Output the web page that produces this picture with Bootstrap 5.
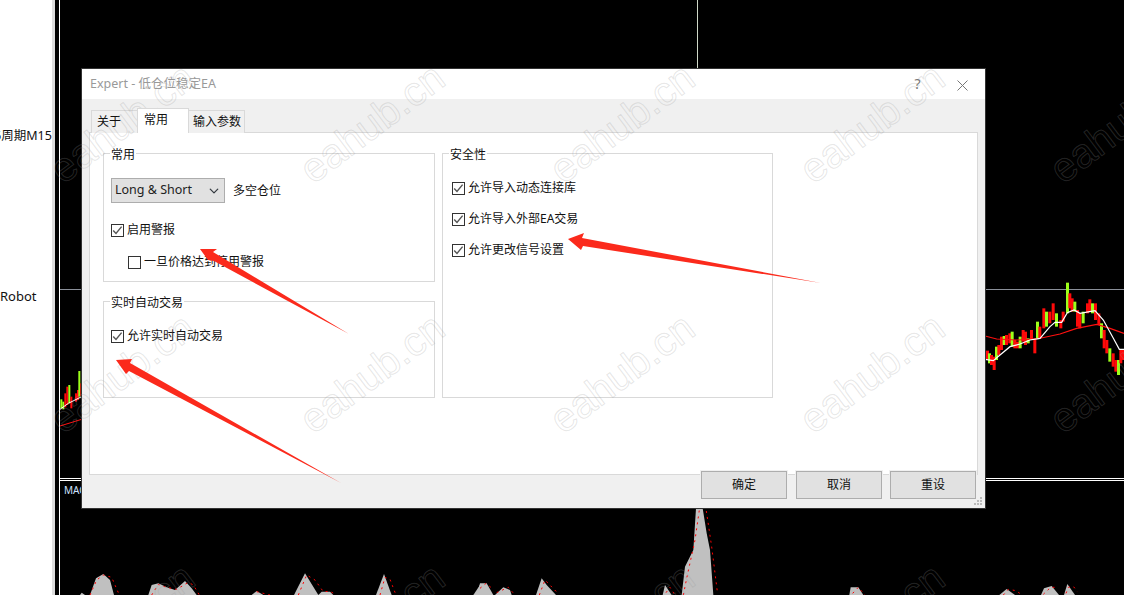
<!DOCTYPE html>
<html lang="zh">
<head>
    <meta charset="UTF-8">
    <title>Expert - 低仓位稳定EA</title>
    <link href="https://cdn.jsdelivr.net/npm/bootstrap@5.3.2/dist/css/bootstrap.min.css" rel="stylesheet">
    <style>
        html, body { margin: 0; background: #fff; overflow: hidden; }
        body, .ea-dialog { font-family: "Noto Sans", "Noto Sans CJK SC", sans-serif; font-size: 12px; color: #111; }
        .desk { width: 1124px; height: 595px; overflow: hidden; }
        .side-labels { width: 52px; white-space: nowrap; line-height: 16px; font-size: 13px; overflow: hidden; }
        .side-labels span { display: block; }
        .label-top { margin-top: 128px; margin-left: -6px; font-size: 12.5px; }
        .label-bot { margin-top: 144px; }
        .side-strip { width: 7px; background: linear-gradient(90deg, #ddd 0 3px, #000 3px); }
        .chart-area { background: #000; }
        .chart-area svg { display: block; }
        .mac-label { position: absolute; left: 5px; top: 483px; color: #cfe3ff; font-size: 10px; line-height: 14px; }

        .ea-dialog { position: absolute; left: 82px; top: 69px; width: 903px; height: 439px; background: #f0f0f0; box-shadow: 0 0 0 1px #333; }
        .title-row { height: 30px; background: #fff; padding: 0 0 0 8px; }
        .title-text { color: #999; font-size: 12.5px; }
        .title-btn { color: #777; font-size: 14px; width: 45px; text-align: center; line-height: 1; }
        .tab-row { margin: 9px 7px 0 7px; height: 24px; padding-left: 2px; }
        .tab-row .nav-link { font-size: 12px; color: #111; height: 23px; line-height: 22px; margin-top: 2px; border: 1px solid #d9d9d9; border-bottom: 0; border-radius: 0; background: #f0f0f0; }
        .tab-first { padding: 0 16px 0 5px; border-right: 0 !important; }
        .tab-last { padding: 0 3px 0 4px; border-left: 0 !important; }
        .tab-row .nav-link.active { background: #fff; height: 25px; margin-top: 0; padding: 0 20px 0 6px; position: relative; z-index: 1; }
        .tab-pane-box { margin: 0 7px; height: 343px; background: #fff; border: 1px solid #d9d9d9; padding: 11px 13px; }
        .group-cols { grid-template-columns: 332px 331px; column-gap: 7px; }
        .group-left { display: flex; flex-direction: column; gap: 10px; }
        .grp { border: 1px solid #d9d9d9; padding: 0 7px; margin: 0; min-width: 0; }
        .grp legend { float: none; width: auto; font-size: 12px; line-height: 14px; margin: 0 0 0 -1px; padding: 4px 1px 0 1px; }
        .grp-a { height: 138px; }
        .grp-b { height: 106px; }
        .grp-c { height: 254px; padding: 0 9px; }
        .grp-c legend { margin-left: -3px; }
        .combo-row { margin-top: 16px; gap: 8px; }
        .combo-select { width: 114px; height: 25px; padding: 0 0 0 3px; font-size: 12.5px; background-color: #e1e1e1; border: 1px solid #adadad; border-radius: 0; color: #222; box-shadow: none; background-position: right 4px center; background-size: 12px 10px; }
        .opt { display: flex; align-items: center; margin: 0; padding: 0; min-height: 16px; line-height: 16px; gap: 3px; }
        .opt .form-check-input { float: none; margin: 0; width: 13px; height: 13px; border: 1px solid #333; border-radius: 0; background-color: #fff; background-size: 13px 13px; box-shadow: none; opacity: 1; flex: none; }
        .opt .form-check-input:checked { background-color: #fff; border-color: #333; background-image: url("data:image/svg+xml,%3csvg xmlns='http://www.w3.org/2000/svg' viewBox='0 0 13 13'%3e%3cpath fill='none' stroke='%23555' stroke-width='1.4' d='M2.2 6.4 5 9.4 10.6 2.6'/%3e%3c/svg%3e"); }
        .opt .form-check-label { opacity: 1; color: #111; }
        .opt-alert { margin-top: 19px; }
        .opt-sub { margin-top: 16px; margin-left: 17px; }
        .opt-live { margin-top: 18px; }
        .opt-stack { display: flex; flex-direction: column; gap: 15px; margin-top: 18px; }
        .foot-row { position: absolute; right: 9px; bottom: 9px; gap: 8px; }
        .dlg-btn { height: 28px; font-size: 12px; padding: 0; background: #e1e1e1; border: 1px solid #adadad; border-radius: 0; color: #111; box-shadow: 0 0 0 1px #f0f0f0; }
        .btn-w1 { width: 86px; }
        .btn-w1:first-child { margin-right: 1px; }
        .grip { position: absolute; right: 2px; bottom: 2px; }

        .overlay { position: absolute; left: 0; top: 0; pointer-events: none; }
        .mark-text { position: absolute; width: 190px; text-align: center; font-family: "Liberation Sans", sans-serif; font-size: 41px; line-height: 48px; color: transparent; -webkit-text-stroke: 1px rgba(150,150,150,.24); transform: rotate(-37deg); white-space: nowrap; }
    </style>
</head>
<body>
<div class="desk d-flex position-relative">
    <div class="side-labels flex-shrink-0">
        <span class="label-top">6周期M15</span>
        <span class="label-bot">Robot</span>
    </div>
    <div class="side-strip flex-shrink-0"></div>
    <div class="chart-area flex-grow-1 position-relative">
        <svg id="chart" width="1065" height="595" viewBox="59 0 1065 595"></svg>
        <div class="mac-label">MACD</div>
    </div>

    <div class="ea-dialog">
        <div class="title-row d-flex align-items-center justify-content-between">
            <span class="title-text">Expert - 低仓位稳定EA</span>
            <span class="d-flex">
                <span class="title-btn">?</span>
                <span class="title-btn">
                    <svg width="11" height="11" viewBox="0 0 11 11"><path d="M.5.5l10 10M10.5.5l-10 10" stroke="#777" fill="none"/></svg>
                </span>
            </span>
        </div>
        <ul class="nav tab-row">
            <li class="nav-item"><a class="nav-link tab-first" href="#">关于</a></li>
            <li class="nav-item"><a class="nav-link active" href="#">常用</a></li>
            <li class="nav-item"><a class="nav-link tab-last" href="#">输入参数</a></li>
        </ul>
        <div class="tab-pane-box">
            <div class="d-grid group-cols">
                <div class="group-left">
                    <fieldset class="grp grp-a">
                        <legend>常用</legend>
                        <div class="d-flex align-items-center combo-row">
                            <select class="form-select combo-select"><option>Long &amp; Short</option></select>
                            <span>多空仓位</span>
                        </div>
                        <div class="form-check opt opt-alert">
                            <input class="form-check-input" type="checkbox" id="c1" checked>
                            <label class="form-check-label" for="c1">启用警报</label>
                        </div>
                        <div class="form-check opt opt-sub">
                            <input class="form-check-input" type="checkbox" id="c2">
                            <label class="form-check-label" for="c2">一旦价格达到停用警报</label>
                        </div>
                    </fieldset>
                    <fieldset class="grp grp-b">
                        <legend>实时自动交易</legend>
                        <div class="form-check opt opt-live">
                            <input class="form-check-input" type="checkbox" id="c3" checked>
                            <label class="form-check-label" for="c3">允许实时自动交易</label>
                        </div>
                    </fieldset>
                </div>
                <fieldset class="grp grp-c">
                    <legend>安全性</legend>
                    <div class="opt-stack">
                        <div class="form-check opt">
                            <input class="form-check-input" type="checkbox" id="c4" checked>
                            <label class="form-check-label" for="c4">允许导入动态连接库</label>
                        </div>
                        <div class="form-check opt">
                            <input class="form-check-input" type="checkbox" id="c5" checked>
                            <label class="form-check-label" for="c5">允许导入外部EA交易</label>
                        </div>
                        <div class="form-check opt">
                            <input class="form-check-input" type="checkbox" id="c6" checked>
                            <label class="form-check-label" for="c6">允许更改信号设置</label>
                        </div>
                    </div>
                </fieldset>
            </div>
        </div>
        <div class="foot-row d-flex">
            <button class="btn dlg-btn btn-w1">确定</button>
            <button class="btn dlg-btn btn-w1">取消</button>
            <button class="btn dlg-btn btn-w1">重设</button>
        </div>
        <svg class="grip" width="10" height="10" viewBox="0 0 10 10">
            <path d="M7 1h2v2H7zM4 4h2v2H4zM7 4h2v2H7zM1 7h2v2H1zM4 7h2v2H4zM7 7h2v2H7z" fill="#bbb"/>
        </svg>
    </div>

    <div id="marks" class="overlay"></div>
    <svg class="overlay" width="1124" height="595">
        <!-- 红色箭头 -->
        <polygon fill="#fb2a1c" points="200,249 217,249 213,252 349,334 214,261 208,260"/>
        <polygon fill="#fb2a1c" points="116,360 132,359 130,363 341,483 129,371 126,374"/>
        <polygon fill="#fb2a1c" points="568,239 584,233 582,238 821,283 583,246 581,250"/>
    </svg>
</div>

<script>
// 图表数据（放大图坐标）
const svg = document.getElementById('chart');
let out = '';
const add = s => { out += s; };

// 十字线和分隔线
add('<line x1="59" y1="289.5" x2="1124" y2="289.5" stroke="#8a8f99"/>');
add('<line x1="697.5" y1="0" x2="697.5" y2="70" stroke="#cfd8c8"/>');
add('<line x1="59.5" y1="0" x2="59.5" y2="595" stroke="#fff"/>');
add('<line x1="59" y1="478.5" x2="1124" y2="478.5" stroke="#fff"/>');
add('<line x1="59" y1="480.5" x2="1124" y2="480.5" stroke="#fff"/>');

// 右侧K线
const candles = [[18,242,268],[24,250,280],[30,255,285],[38,260,300],[45,230,270],[52,225,255],[60,200,240],[68,198,225],[75,195,225],[85,190,220],[92,185,230],[100,210,235],[108,215,235],[116,200,235],[125,180,215],[132,185,225],[140,205,220],[150,180,210],[160,205,250],[168,155,205],[175,170,205],[187,115,175],[195,125,170],[205,125,160],[215,100,150],[225,130,170],[238,150,175],[245,125,155],[258,38,130],[265,70,115],[272,85,125],[280,95,125],[288,120,170],[295,130,175],[305,125,160],[318,100,130],[325,88,125],[333,100,130],[342,100,150],[352,130,165],[360,160,205],[368,180,235],[376,210,250],[385,235,275],[395,250,290],[403,270,305],[411,270,315],[418,240,280],[425,240,270]];
candles.forEach((c, i) => {
    const color = (i % 3 === 1) ? '#9dff1a' : '#ff0a0a';
    add(`<rect x="${980 + c[0] / 3}" y="${270 + c[1] / 3}" width="3" height="${(c[2] - c[1]) / 3}" fill="${color}"/>`);
});
const pts = (arr, ox, oy) => arr.map(p => `${ox + p[0] / 3},${oy + p[1] / 3}`).join(' ');
add(`<polyline fill="none" stroke="#ff1010" stroke-width="1.2" points="${pts([[15,198],[50,207],[110,210],[170,207],[240,192],[290,175],[350,163],[390,175],[432,190]], 980, 270)}"/>`);
add(`<polyline fill="none" stroke="#fff" stroke-width="1.2" points="${pts([[15,268],[40,272],[60,255],[90,230],[120,222],[150,210],[180,205],[210,170],[225,157],[245,157],[262,128],[282,120],[300,130],[345,122],[370,150],[400,205],[418,238],[432,238]], 980, 270)}"/>`);

// 左侧K线
[[181,388,415,'#9dff1a'],[187,395,418,'#9dff1a'],[193,370,412,'#ff0a0a'],[199,350,405,'#ff0a0a'],[205,345,400,'#9dff1a'],[211,380,415,'#ff0a0a'],[225,370,395,'#ff0a0a'],[231,360,390,'#ff0a0a'],[235,303,380,'#9dff1a'],[241,340,378,'#ff0a0a']].forEach(c => {
    add(`<rect x="${c[0] / 3}" y="${270 + c[1] / 3}" width="2" height="${(c[2] - c[1]) / 3}" fill="${c[3]}"/>`);
});
add(`<polyline fill="none" stroke="#fff" points="${pts([[180,418],[205,400],[245,380]], 0, 270)}"/>`);
add(`<polyline fill="none" stroke="#ff1010" points="${pts([[180,468],[245,448]], 0, 270)}"/>`);

// MACD柱
const peaksA = [
    [[0,285],[5,278],[15,285]],
    [[30,285],[48,235],[70,222],[90,240],[102,285]],
    [[205,285],[215,255],[235,250],[260,262],[285,270],[315,243],[335,265],[350,285]],
    [[515,285],[530,273],[550,285]],
    [[642,285],[675,220],[715,285],[725,275],[750,275],[760,285]],
    [[888,285],[912,222],[935,285]],
    [[1180,285],[1200,255],[1200,285]]
];
const peaksB = [
    [[0,250],[20,250],[40,285],[-10,285]],
    [[45,285],[70,262],[90,270],[95,285]],
    [[168,285],[185,235],[200,255],[228,285]],
    [[548,285],[555,255],[575,285]],
    [[605,285],[615,200],[640,150],[648,25],[668,25],[680,100],[690,150],[700,285]],
    [[1108,285],[1112,262],[1135,262],[1150,285]]
];
const peaksC = [
    [[418,285],[440,267],[465,285]],
    [[543,285],[552,265],[575,258],[597,285]],
    [[612,285],[622,252],[645,285]]
];
peaksA.forEach(p => add(`<polygon fill="#c0c0c0" points="${pts(p, 80, 500)}"/>`));
peaksB.forEach(p => add(`<polygon fill="#c0c0c0" points="${pts(p, 480, 500)}"/>`));
peaksC.forEach(p => add(`<polygon fill="#c0c0c0" points="${pts(p, 860, 500)}"/>`));

const dashA = [
    [[30,285],[50,240],[70,225],[95,232],[118,285]],
    [[215,285],[235,253],[260,262],[290,268],[325,247],[340,255],[358,285]],
    [[530,275],[570,285]],
    [[655,285],[680,225],[705,240],[730,275],[750,274],[770,285]],
    [[900,285],[915,232],[930,238],[948,285]]
];
const dashB = [
    [[0,265],[18,250],[40,268]],
    [[50,278],[85,262],[105,285]],
    [[178,285],[195,240],[232,278]],
    [[558,278],[570,262],[585,285]],
    [[610,285],[620,235],[645,120],[658,30]],
    [[679,33],[695,140],[712,275]],
    [[1118,280],[1135,262],[1155,285]]
];
const dashC = [
    [[430,285],[445,268],[468,272],[485,284]],
    [[550,283],[572,262],[593,262]],
    [[618,280],[625,262],[640,259],[652,275]]
];
dashA.forEach(p => add(`<polyline fill="none" stroke="#ff0000" stroke-dasharray="2 4" points="${pts(p, 80, 500)}"/>`));
dashB.forEach(p => add(`<polyline fill="none" stroke="#ff0000" stroke-dasharray="2 4" points="${pts(p, 480, 500)}"/>`));
dashC.forEach(p => add(`<polyline fill="none" stroke="#ff0000" stroke-dasharray="2 4" points="${pts(p, 860, 500)}"/>`));
svg.innerHTML = out;

// 水印
const marks = document.getElementById('marks');
marks.innerHTML = [123, 373, 623].flatMap(y =>
    [122, 372, 622, 872, 1122].map(x => `<div class="mark-text" style="left:${x - 95}px;top:${y - 24}px">eahub.cn</div>`)
).join('');
</script>
<script src="https://cdn.jsdelivr.net/npm/bootstrap@5.3.2/dist/js/bootstrap.bundle.min.js"></script>
</body>
</html>
